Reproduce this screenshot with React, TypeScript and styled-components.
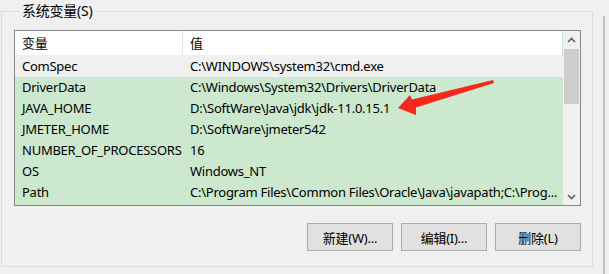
import styled, { createGlobalStyle } from "styled-components";

const GlobalStyle = createGlobalStyle`
  html, body {
    margin: 0;
    padding: 0;
    background: #f0f0f0;
  }
  body {
    font-family: "Noto Sans", "Noto Sans CJK SC", sans-serif;
    font-size: 13px;
    letter-spacing: -0.25px;
    color: #000;
  }
`;

const rows = [
  { name: "ComSpec", value: "C:\\WINDOWS\\system32\\cmd.exe" },
  { name: "DriverData", value: "C:\\Windows\\System32\\Drivers\\DriverData" },
  { name: "JAVA_HOME", value: "D:\\SoftWare\\Java\\jdk\\jdk-11.0.15.1" },
  { name: "JMETER_HOME", value: "D:\\SoftWare\\jmeter542" },
  { name: "NUMBER_OF_PROCESSORS", value: "16" },
  { name: "OS", value: "Windows_NT" },
  {
    name: "Path",
    value: "C:\\Program Files\\Common Files\\Oracle\\Java\\javapath;C:\\Prog...",
  },
];

const App = () => {
  return (
    <>
      <GlobalStyle />
      <Window>
        <GroupBox>
          <Legend>系统变量(S)</Legend>
          <ListBox>
            <ListContent>
              <HeaderRow>
                <HeaderCell>变量</HeaderCell>
                <HeaderCell>值</HeaderCell>
              </HeaderRow>
              {rows.map((row, i) => (
                <Row key={row.name} $plain={i === 0}>
                  <Cell>{row.name}</Cell>
                  <Cell>{row.value}</Cell>
                </Row>
              ))}
            </ListContent>
            <ScrollBar>
              <ScrollArrow>
                <svg width="9" height="6" viewBox="0 0 9 6">
                  <path d="M1 5 L4.5 1.5 L8 5" fill="none" stroke="#606060" strokeWidth="1.6" />
                </svg>
              </ScrollArrow>
              <Track>
                <Thumb />
              </Track>
              <ScrollArrow>
                <svg width="9" height="6" viewBox="0 0 9 6">
                  <path d="M1 1 L4.5 4.5 L8 1" fill="none" stroke="#606060" strokeWidth="1.6" />
                </svg>
              </ScrollArrow>
            </ScrollBar>
            <Arrow width="100" height="40" viewBox="0 0 100 40">
              <polygon
                points="0,28 12,15 14,19.5 95,0 96,3 18,27.5 18,35"
                fill="#f4281c"
              />
            </Arrow>
          </ListBox>
          <ButtonRow>
            <Button>新建(W)...</Button>
            <Button>编辑(I)...</Button>
            <Button>删除(L)</Button>
          </ButtonRow>
        </GroupBox>
      </Window>
    </>
  );
};

const Window = styled.div`
  width: 609px;
  height: 274px;
  overflow: hidden;
  display: flex;
  align-items: flex-start;
`;

const GroupBox = styled.fieldset`
  box-sizing: border-box;
  width: 592px;
  height: 265px;
  margin: 2px 0 0 1px;
  padding: 0 0 0 12px;
  border: 1px solid #dcdcdc;
  min-width: 0;
  position: relative;

  &::after {
    content: "";
    position: absolute;
    top: -4px;
    left: 601px;
    width: 2px;
    height: 290px;
    background: #c4c4c4;
  }
`;

const Legend = styled.legend`
  margin-left: 6px;
  padding: 0 2px;
  font-size: 14px;
  line-height: 18px;
`;

const ListBox = styled.div`
  box-sizing: border-box;
  margin-top: 10px;
  width: 567px;
  height: 176px;
  border: 1px solid #828790;
  background: #cce8cf;
  display: flex;
  position: relative;
`;

const ListContent = styled.div`
  width: 548px;
  overflow: hidden;
`;

const HeaderRow = styled.div`
  display: grid;
  grid-template-columns: 168px 1fr;
  height: 24px;
  background: #fff;
  border-bottom: 1px solid #f0f0f0;
  margin-right: 1px;
`;

const HeaderCell = styled.div`
  padding-left: 7px;
  line-height: 25px;
  &:first-child {
    border-right: 1px solid #e5e5e5;
  }
`;

const Row = styled.div<{ $plain?: boolean }>`
  display: grid;
  grid-template-columns: 168px 1fr;
  height: 21px;
  line-height: 21px;
  background: ${(p) => (p.$plain ? "#f0f0f0" : "#cce8cf")};
`;

const Cell = styled.div`
  padding-left: 7px;
  white-space: nowrap;
  overflow: hidden;
`;

const ScrollBar = styled.div`
  width: 17px;
  background: #f0f0f0;
  display: flex;
  flex-direction: column;
`;

const ScrollArrow = styled.div`
  height: 17px;
  display: flex;
  align-items: center;
  justify-content: center;
`;

const Track = styled.div`
  flex: 1;
  padding: 1px 1px 0;
`;

const Thumb = styled.div`
  height: 55px;
  background: #cdcdcd;
`;

const Arrow = styled.svg`
  position: absolute;
  left: 383px;
  top: 49px;
`;

const ButtonRow = styled.div`
  display: flex;
  justify-content: flex-end;
  gap: 8px;
  width: 567px;
  margin-top: 17px;
`;

const Button = styled.button`
  box-sizing: border-box;
  width: 86px;
  height: 28px;
  background: #e1e1e1;
  border: 1px solid #adadad;
  border-radius: 0;
  font-family: "Noto Sans", "Noto Sans CJK SC", sans-serif;
  font-size: 13px;
  letter-spacing: -0.25px;
  color: #000;
  padding: 0;
`;

export default App;
